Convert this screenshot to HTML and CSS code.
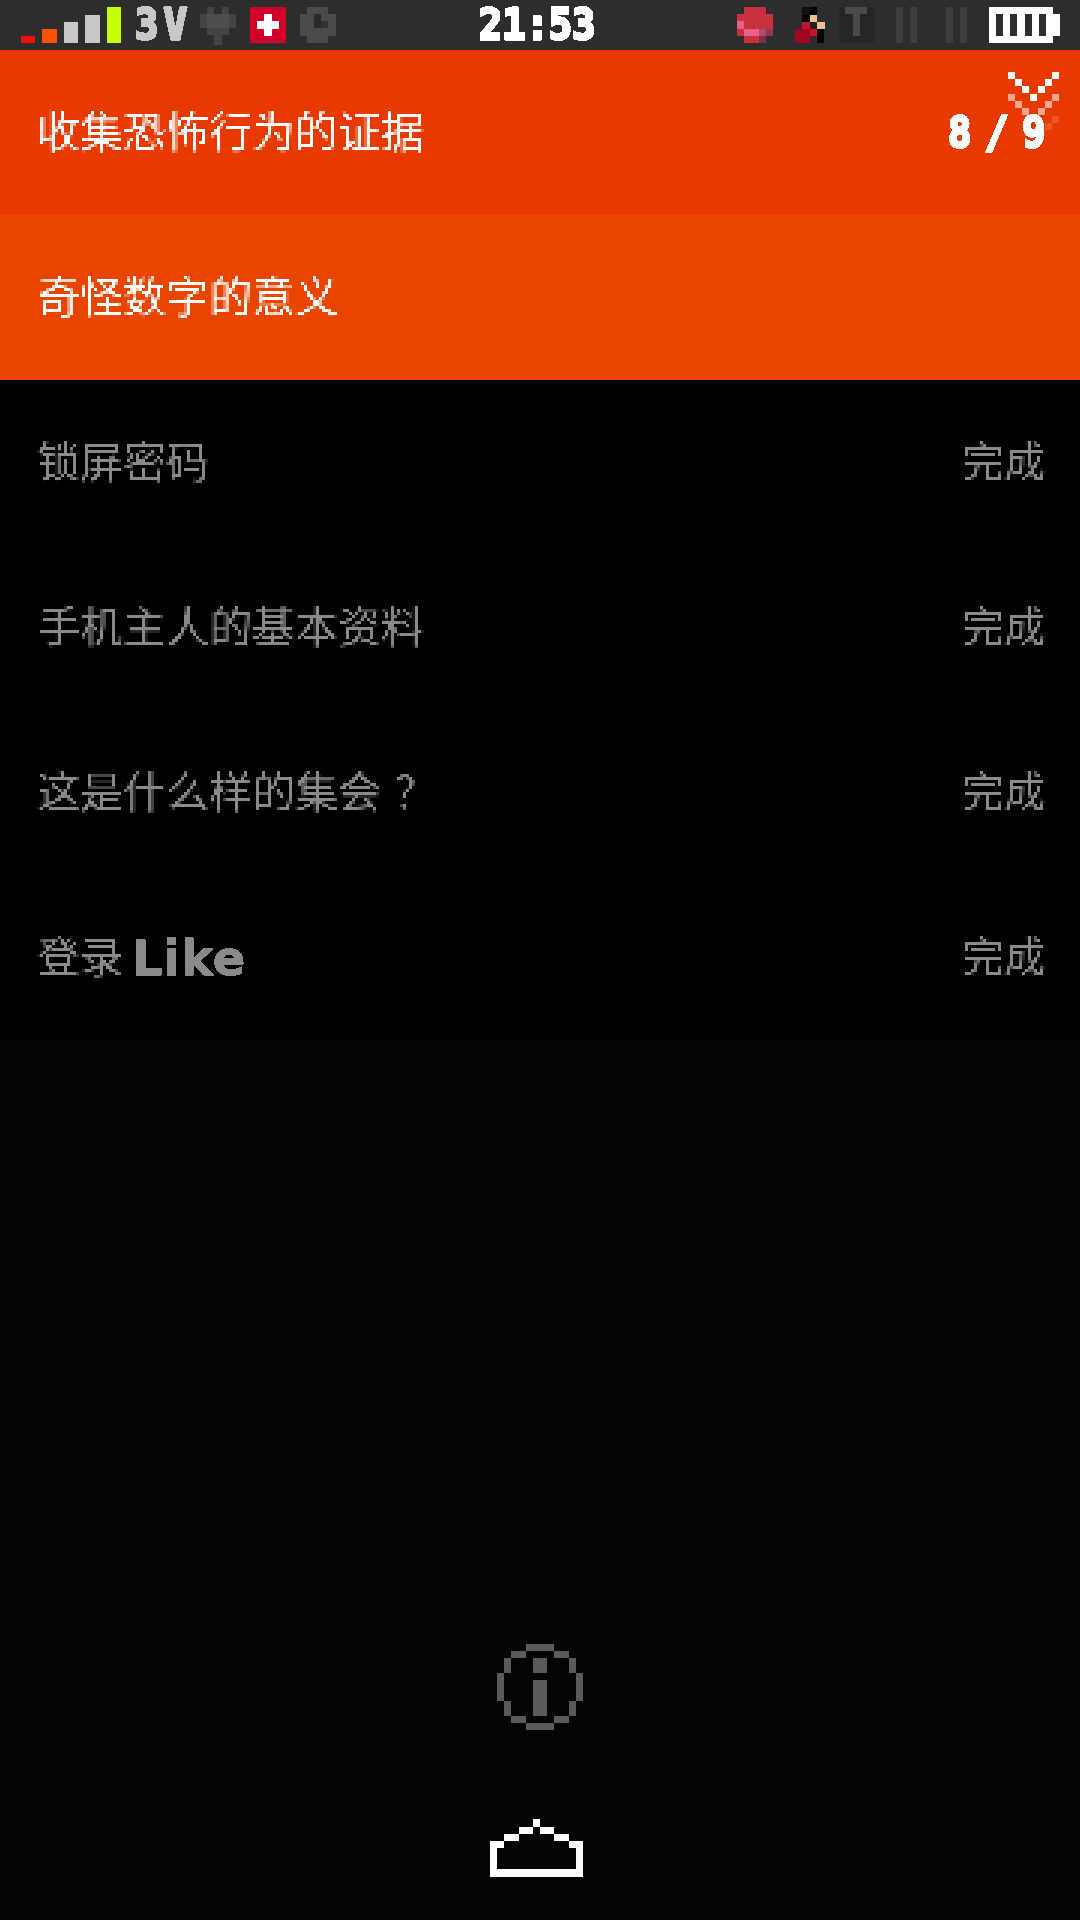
FILE: index.html
```html
<!DOCTYPE html>
<html lang="zh-CN">
<head>
  <meta charset="UTF-8" />
  <meta name="viewport" content="width=device-width, initial-scale=1.0"/>
  <title>收集恐怖行为的证据</title>
  <link rel="stylesheet" href="styles.css">
</head>
<body>
  <svg class="defs" width="0" height="0" aria-hidden="true">
    <filter id="px3" x="0" y="0" width="100%" height="100%">
      <feFlood x="1" y="1" width="1" height="1"/>
      <feComposite width="3" height="3"/>
      <feTile result="grid"/>
      <feComposite in="SourceGraphic" in2="grid" operator="in"/>
      <feMorphology operator="dilate" radius="1"/>
    </filter>
    <filter id="crisp" x="0" y="0" width="100%" height="100%">
      <feComponentTransfer>
        <feFuncA type="discrete" tableValues="0 0 1 1"/>
      </feComponentTransfer>
    </filter>
  </svg>

  <div class="status">
    <svg class="signal" width="100" height="36" viewBox="0 0 100 36">
      <rect x="0" y="29" width="14" height="7" fill="#ee0f0f"/>
      <rect x="21" y="22" width="15" height="14" fill="#fc5200"/>
      <rect x="43" y="15" width="14" height="21" fill="#c8c8c8"/>
      <rect x="64" y="8" width="15" height="28" fill="#c8c8c8"/>
      <rect x="86" y="0" width="14" height="36" fill="#c8ff00"/>
    </svg>
    <span class="net">3V</span>
    <svg class="ic-heart" width="36" height="38" viewBox="0 0 36 38">
      <path d="M7 0h7v7h8V0h7v7h7v14h-7v7h-7v10h-8V28H7v-7H0V7h7z" fill="#444"/>
      <rect x="7" y="7" width="22" height="14" fill="#4e4e4e"/>
    </svg>
    <svg class="ic-swiss" width="36" height="36" viewBox="0 0 36 36">
      <rect width="36" height="36" fill="#d0002a"/>
      <rect x="7" y="14" width="22" height="8" fill="#fff"/>
      <rect x="14" y="7" width="8" height="22" fill="#fff"/>
    </svg>
    <svg class="ic-cam" width="36" height="36" viewBox="0 0 36 36">
      <path d="M7 0h21v7h8v22h-8v7H7v-7H0V7h7z" fill="#4a4a4a"/>
      <rect x="14" y="7" width="7" height="14" fill="#2a2a2a"/>
      <rect x="21" y="14" width="7" height="7" fill="#333"/>
    </svg>
    <span class="time">21:53</span>
    <svg class="ic-blob" width="36" height="36" viewBox="0 0 36 36">
      <path d="M7 0h22v7h7v22h-7v7H7v-7H0V7h7z" fill="#c8323c"/>
      <rect x="0" y="14" width="7" height="8" fill="#e0608a"/>
      <rect x="7" y="22" width="15" height="7" fill="#ea5f8e"/>
      <rect x="22" y="22" width="7" height="7" fill="#b04a68"/>
      <rect x="29" y="22" width="7" height="7" fill="#8a3a50"/>
      <rect x="22" y="29" width="7" height="7" fill="#7a3048"/>
    </svg>
    <svg class="ic-fig" width="30" height="36" viewBox="0 0 30 36">
      <rect x="7" y="0" width="8" height="8" fill="#111"/>
      <rect x="15" y="0" width="7" height="8" fill="#000"/>
      <rect x="7" y="8" width="8" height="7" fill="#000"/>
      <rect x="15" y="8" width="7" height="7" fill="#f0c090"/>
      <rect x="22" y="15" width="8" height="7" fill="#f0c090"/>
      <rect x="15" y="15" width="7" height="7" fill="#222"/>
      <rect x="7" y="15" width="8" height="14" fill="#c8102a"/>
      <rect x="15" y="22" width="7" height="7" fill="#c8102a"/>
      <rect x="0" y="22" width="15" height="14" fill="#a00820"/>
      <rect x="22" y="22" width="7" height="14" fill="#000"/>
    </svg>
    <svg class="ic-t" width="35" height="36" viewBox="0 0 35 36">
      <rect width="35" height="36" fill="#262626"/>
      <rect x="6" y="0" width="22" height="7" fill="#4a4a4a"/>
      <rect x="14" y="7" width="7" height="22" fill="#4a4a4a"/>
    </svg>
    <svg class="ic-bars" width="21" height="36" viewBox="0 0 21 36">
      <rect width="7" height="36" fill="#3d3d3d"/>
      <rect x="14" width="7" height="36" fill="#3d3d3d"/>
    </svg>
    <svg class="ic-bars2" width="21" height="36" viewBox="0 0 21 36">
      <rect width="7" height="36" fill="#3d3d3d"/>
      <rect x="14" width="7" height="36" fill="#3d3d3d"/>
    </svg>
    <svg class="ic-batt" width="71" height="36" viewBox="0 0 71 36">
      <rect width="64" height="36" fill="#fff"/>
      <rect x="64" y="7" width="7" height="22" fill="#fff"/>
      <rect x="7" y="7" width="7" height="22" fill="#2d2d2d"/>
      <rect x="21" y="7" width="7" height="22" fill="#2d2d2d"/>
      <rect x="36" y="7" width="7" height="22" fill="#2d2d2d"/>
      <rect x="50" y="7" width="7" height="22" fill="#2d2d2d"/>
    </svg>
  </div>

  <div class="item active">
    <span class="label">收集恐怖行为的证据</span>
    <div class="progress">
      <svg class="close" width="52" height="64" viewBox="0 0 52 64">
        <path d="M0 0h7v7H0zM44 0h7v7h-7zM7 7h7v7H7zM37 7h7v7h-7zM14 14h7v7h-7zM30 14h7v7h-7zM22 22h7v7h-7z" fill="#fff"/>
        <path d="M0 22h7v7H0zM44 22h7v7h-7zM7 29h7v7H7zM37 29h7v7h-7zM14 36h7v7h-7zM30 36h7v7h-7z" fill="#fff" fill-opacity=".55"/>
        <path d="M44 44h7v7h-7zM37 51h7v7h-7zM30 58h7v6h-7z" fill="#fff" fill-opacity=".15"/>
      </svg>
      <span class="count">8/9</span>
    </div>
  </div>
  <div class="item next">
    <span class="label">奇怪数字的意义</span>
  </div>

  <ul class="list">
    <li><span class="label">锁屏密码</span><span class="label done">完成</span></li>
    <li><span class="label">手机主人的基本资料</span><span class="label done">完成</span></li>
    <li><span class="label">这是什么样的集会<span class="mark">？</span></span><span class="label done">完成</span></li>
    <li>
      <span class="login"><span class="label">登录</span><span class="like">Like</span></span>
      <span class="label done">完成</span>
    </li>
  </ul>

  <div class="footer">
    <svg class="info" width="86" height="86" viewBox="0 0 12 12">
      <path d="M4 0h4v1H4zM2 1h2v1H2zM8 1h2v1H8zM1 2h1v2H1zM10 2h1v2h-1zM0 4h1v4H0zM11 4h1v4h-1zM1 8h1v2H1zM10 8h1v2h-1zM2 10h2v1H2zM8 10h2v1H8zM4 11h4v1H4zM5 2h2v2H5zM5 5h2v5H5z" fill="#5a5a5a"/>
    </svg>
    <svg class="home" width="93" height="58" viewBox="0 0 13 8">
      <path d="M6 0h1v1H6zM4 1h2v1H4zM7 1h2v1H7zM2 2h2v1H2zM9 2h2v1H9zM0 3h2v1H0zM11 3h2v1h-2zM0 4h1v3H0zM12 4h1v3h-1zM0 7h13v1H0z" fill="#fff"/>
    </svg>
  </div>
</body>
</html>
```

FILE: styles.css
```css
* {
  box-sizing: border-box;
}

body {
  font-family: "Noto Sans CJK SC", "Noto Sans", sans-serif;
  background-color: #050505;
  margin: 0;
  padding: 0;
  width: 1080px;
  height: 1920px;
  display: flex;
  flex-direction: column;
  overflow: hidden;
}

svg {
  display: block;
  flex: none;
  shape-rendering: crispEdges;
}

.defs {
  position: absolute;
}

/* status bar */
.status {
  height: 50px;
  background-color: #2d2d2d;
  display: flex;
  align-items: center;
  padding-left: 21px;
  flex: none;
}

.status svg {
  align-self: flex-start;
  margin-top: 7px;
}

.net,
.time,
.count {
  font-family: "DejaVu Sans Mono", monospace;
  font-weight: 700;
  font-size: 42px;
  line-height: 50px;
  white-space: nowrap;
  -webkit-text-stroke: 3px currentColor;
  transform: scaleX(0.92);
  transform-origin: left center;
  filter: url(#crisp);
}

.net {
  color: #c8c8c8;
  width: 50px;
  margin-left: 14px;
  letter-spacing: 6px;
}

.time {
  color: #fff;
  width: 116px;
  margin-left: 143px;
}

.status .ic-heart { margin-left: 15px; }
.status .ic-swiss { margin-left: 14px; }
.status .ic-cam { margin-left: 14px; }
.status .ic-blob { margin-left: 142px; }
.status .ic-fig { margin-left: 22px; }
.status .ic-t { margin-left: 14px; }
.status .ic-bars { margin-left: 22px; }
.status .ic-bars2 { margin-left: 29px; }
.status .ic-batt { margin-left: 22px; }

/* task rows */
.label {
  font-size: 43px;
  line-height: 60px;
  white-space: nowrap;
  margin-bottom: 8px;
  filter: url(#px3);
}

.done {
  font-size: 42px;
}

.mark {
  font-family: "Noto Sans CJK TC", sans-serif;
  padding-left: 13px;
}

.item {
  height: 165px;
  flex: none;
  display: flex;
  align-items: center;
  justify-content: space-between;
  padding: 0 34px 0 37px;
  color: #fff;
}

.active {
  background-color: #e83a00;
}

.next {
  background-color: #e84500;
}

.progress {
  position: relative;
  width: 96px;
  height: 36px;
}

.close {
  position: absolute;
  top: -43px;
  right: -14px;
}

.count {
  position: absolute;
  left: -2px;
  top: -7px;
  letter-spacing: 15px;
  color: #fff;
}

.list {
  list-style-type: none;
  margin: 0;
  padding: 0;
  background-color: #000;
  flex: none;
}

.list li {
  height: 165px;
  display: flex;
  align-items: center;
  justify-content: space-between;
  padding: 0 34px 0 37px;
  color: #8a8a8a;
}

.login {
  display: flex;
  align-items: center;
}

.like {
  font-family: "DejaVu Sans", sans-serif;
  font-weight: 700;
  font-size: 48px;
  line-height: 60px;
  letter-spacing: 1px;
  margin-left: 9px;
  -webkit-text-stroke: 1px currentColor;
  filter: url(#crisp);
}

/* bottom icons */
.footer {
  margin-top: auto;
  padding-bottom: 43px;
  display: flex;
  flex-direction: column;
  align-items: center;
  gap: 89px;
}

.home {
  margin-right: 7px;
}
```
